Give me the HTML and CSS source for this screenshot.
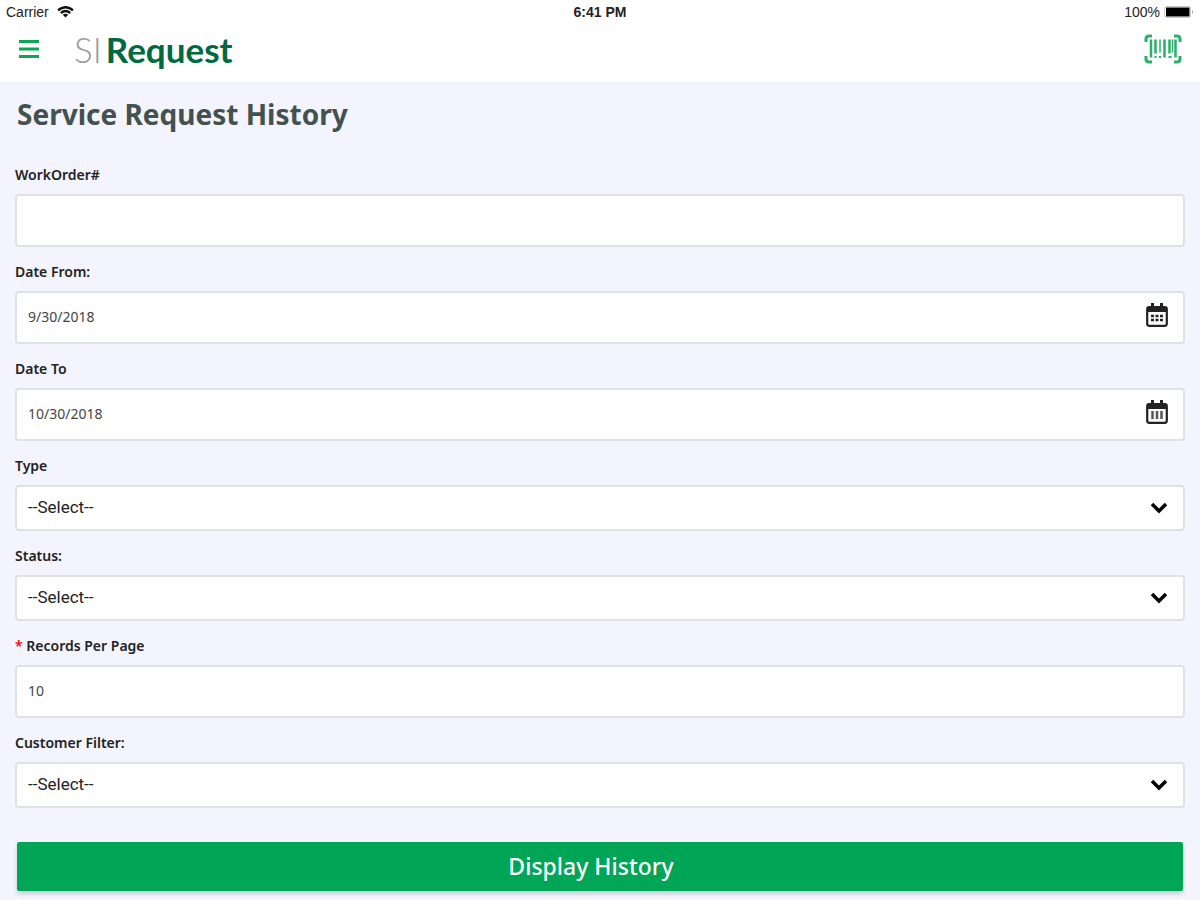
FILE: index.html
```html
<!DOCTYPE html>
<html lang="en">
<head>
<meta charset="utf-8">
<meta name="viewport" content="width=device-width, initial-scale=1">
<title>Service Request History</title>
<link rel="stylesheet" href="styles.css">
</head>
<body>
<header class="top">
  <div class="status">
    <span class="carrier">Carrier
      <svg width="17" height="12" viewBox="0 0 17 12" aria-hidden="true"><g fill="none" stroke="#111" stroke-width="2.4"><path d="M1 4.2Q8.500-1.800 16 4.200"/><path d="M3.800 7Q8.500 3.200 13.200 7"/></g><path d="M5.800 8.700Q8.500 6.800 11.200 8.700L8.500 11.600Z" fill="#111"/></svg>
    </span>
    <span class="clock">6:41 PM</span>
    <span class="battery">100%
      <svg width="30" height="12" viewBox="0 0 30 12" aria-hidden="true"><rect x=".5" y=".5" width="26" height="11" rx="2" fill="#fff" stroke="#ccc"/><rect x="2" y="1.500" width="23.500" height="9" fill="#000"/><path d="M28 4q2 2 0 4z" fill="#999"/></svg>
    </span>
  </div>
  <div class="bar">
    <button class="icon-btn" type="button" aria-label="Menu">
      <svg width="22" height="20" viewBox="0 0 22 20"><path d="M1 2.500h20M1 10h20M1 17.500h20" stroke="#0aa653" stroke-width="3"/></svg>
    </button>
    <div class="logo"><span class="logo-thin">SI</span><span class="logo-bold">Request</span></div>
    <button class="icon-btn scan" type="button" aria-label="Scan barcode">
      <svg width="38" height="30" viewBox="0 0 38 30"><g fill="none" stroke="#2bb06c"><path d="M2 8V5Q2 2 5 2H8M30 2h3q3 0 3 3v3M2 22v3q0 3 3 3h3M30 28h3q3 0 3-3v-3" stroke-width="3"/><path d="M7 5.500v18M31.500 5.500v18" stroke-width="2.500"/><path d="M11.500 5.500v14M20.500 5.500v18M25.500 5.500v14" stroke-width="2.500"/><path d="M16 5.500v13M28.500 5.500v13" stroke-width="1.500"/><path d="M10.500 23h2M15 23h2M24.500 23h3" stroke-width="2"/></g></svg>
    </button>
  </div>
</header>
<main class="page">
  <h1 class="title">Service Request History</h1>
  <form class="form">
    <label class="label" for="wo">WorkOrder#</label>
    <input class="control" id="wo" type="text">

    <label class="label" for="from">Date From:</label>
    <div class="field">
      <input class="control" id="from" type="text" value="9/30/2018">
      <svg class="calendar" width="22" height="24" viewBox="0 0 22 24" aria-hidden="true"><rect x="1.200" y="4.200" width="19.600" height="18.600" rx="2" fill="#fff" stroke="#222" stroke-width="2.200"/><path d="M1 4h20v5H1zM5 0h3v5H5zM14 0h3v5h-3z" fill="#222"/><path d="M5 13h12M5 17h12" stroke="#222" stroke-width="2.500" stroke-dasharray="3 1.500"/></svg>
    </div>

    <label class="label" for="to">Date To</label>
    <div class="field">
      <input class="control" id="to" type="text" value="10/30/2018">
      <svg class="calendar" width="22" height="24" viewBox="0 0 22 24" aria-hidden="true"><rect x="1.200" y="4.200" width="19.600" height="18.600" rx="2" fill="#fff" stroke="#222" stroke-width="2.200"/><path d="M1 4h20v5H1zM5 0h3v5H5zM14 0h3v5h-3z" fill="#222"/><path d="M6.500 11v8M11 11v8M15.500 11v8" stroke="#555" stroke-width="2.500"/></svg>
    </div>

    <label class="label" for="type">Type</label>
    <div class="field">
      <select class="control select" id="type"><option>--Select--</option></select>
      <svg class="chevron" width="18" height="12" viewBox="0 0 18 12" aria-hidden="true"><path d="M2 2l7 7 7-7" fill="none" stroke="#000" stroke-width="3.500"/></svg>
    </div>

    <label class="label" for="status">Status:</label>
    <div class="field">
      <select class="control select" id="status"><option>--Select--</option></select>
      <svg class="chevron" width="18" height="12" viewBox="0 0 18 12" aria-hidden="true"><path d="M2 2l7 7 7-7" fill="none" stroke="#000" stroke-width="3.500"/></svg>
    </div>

    <label class="label" for="records"><span class="required">*</span> Records Per Page</label>
    <input class="control" id="records" type="text" value="10">

    <label class="label" for="customer">Customer Filter:</label>
    <div class="field">
      <select class="control select" id="customer"><option>--Select--</option></select>
      <svg class="chevron" width="18" height="12" viewBox="0 0 18 12" aria-hidden="true"><path d="M2 2l7 7 7-7" fill="none" stroke="#000" stroke-width="3.500"/></svg>
    </div>

    <button class="submit" type="button">Display History</button>
  </form>
</main>
</body>
</html>
```
FILE: styles.css
```css
* { box-sizing: border-box; }

body {
  margin: 0;
  background: #f3f4fd;
  color: #222;
  font-family: "Noto Sans", "Open Sans", sans-serif;
}

.top { background: #fff; }

.status {
  display: grid;
  grid-template-columns: 1fr auto 1fr;
  align-items: center;
  height: 24px;
  padding: 0 6px;
  font: 14px/24px "Liberation Sans", Arial, sans-serif;
}

.carrier, .battery {
  display: flex;
  align-items: center;
  gap: 8px;
}

.battery { justify-content: flex-end; gap: 4px; }

.clock { font-weight: bold; }

.bar {
  display: flex;
  align-items: center;
  height: 58px;
  padding: 0 18px 8px;
}

.icon-btn {
  display: flex;
  padding: 0;
  border: 0;
  background: none;
}

.scan { margin-left: auto; }

.logo {
  display: flex;
  gap: 4px;
  margin-left: 34px;
  font: 35px/48px Lato, sans-serif;
}

.logo-thin { color: #999; font-weight: 300; }

.logo-bold { color: #00693f; font-weight: 700; }

.page { padding: 12px 15px 9px; }

.title {
  margin: 0 2px 16px;
  color: #43514f;
  font-size: 28px;
  line-height: 40px;
}

.form { display: flex; flex-direction: column; }

.label {
  padding: 15px 0 9px;
  color: #222;
  font-size: 14px;
  font-weight: 600;
  line-height: 20px;
}

.required { color: #f00; }

.field { position: relative; }

.control {
  display: block;
  width: 100%;
  height: 53px;
  padding: 0 11px 2px;
  border: 2px solid #dfe1e5;
  border-radius: 4px;
  background: #fff;
  color: #444;
  font: 14px "Noto Sans", sans-serif;
}

.select {
  height: 46px;
  appearance: none;
  color: #222;
  font: 17px Roboto, sans-serif;
}

.calendar {
  position: absolute;
  top: 12px;
  right: 17px;
}

.chevron {
  position: absolute;
  top: 17px;
  right: 17px;
}

.submit {
  height: 49px;
  margin: 34px 2px 0;
  padding: 0 18px 2px 0;
  border: 0;
  border-radius: 2px;
  background: #00a555;
  box-shadow: 0 3px 4px #c9ccd8;
  color: #fff;
  font: 500 23px "Noto Sans", sans-serif;
}
```
